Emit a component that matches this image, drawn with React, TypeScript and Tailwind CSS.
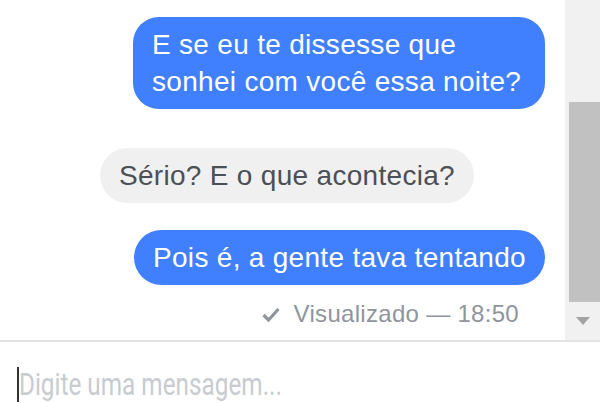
const font = { fontFamily: '"Liberation Sans", Arial, sans-serif' };

function Scrollbar() {
  return (
    <div className="flex w-[35px] flex-col bg-[#f1f1f1] pl-[4px]">
      <div className="h-[102px]" />
      <div className="h-[200px] bg-[#c1c1c1]" />
      <div className="flex flex-1 items-center justify-center pr-[4px]">
        <svg width="14" height="8" viewBox="0 0 14 8">
          <path d="M0 0 L14 0 L7 8 Z" fill="#a3a3a3" />
        </svg>
      </div>
    </div>
  );
}

function CheckMark() {
  return (
    <svg width="18" height="15" viewBox="0 0 18 15">
      <path d="M1.5 8 L6.5 13 L16.5 2" fill="none" stroke="#90949c" strokeWidth="3.2" strokeLinejoin="miter" />
    </svg>
  );
}

export default function App() {
  return (
    <div className="flex h-[403px] w-[600px] flex-col overflow-hidden bg-white" style={font}>
      <div className="flex h-[340px]">
        <div className="flex flex-1 flex-col pr-[20px]">
          <div className="mt-[17px] flex justify-end">
            <div className="w-[412px] whitespace-nowrap rounded-[26px] bg-[#4080ff] py-[9px] pl-[19px] pr-[16px] text-[28px] leading-[37px] tracking-[0.3px] text-white">
              E se eu te dissesse que
              <br />
              sonhei com você essa noite?
            </div>
          </div>
          <div className="mt-[39px] flex pl-[100px]">
            <div className="rounded-[28px] bg-[#f1f0f0] px-[19px] py-[9px] text-[28px] leading-[37px] tracking-[0.3px] text-[#4b4f56]">
              Sério? E o que acontecia?
            </div>
          </div>
          <div className="mt-[27px] flex justify-end">
            <div className="rounded-[28px] bg-[#4080ff] px-[19px] py-[9px] text-[28px] leading-[37px] tracking-[0.3px] text-white">
              Pois é, a gente tava tentando
            </div>
          </div>
          <div className="mt-[11px] flex items-center justify-end gap-[14px] pr-[26px] text-[24px] tracking-[0.3px] text-[#90949c]">
            <CheckMark />
            <span>Visualizado — 18:50</span>
          </div>
        </div>
        <Scrollbar />
      </div>
      <div className="h-[2px] bg-[#e4e4e4]" />
      <div className="flex flex-1 items-start pl-[17px] pt-[25px]">
        <div className="h-[35px] w-[2px] bg-[#333]" />
        <span
          className="origin-left scale-x-[0.76] text-[32px] leading-[35px] text-[#c8ccd1]"
          style={{ fontFamily: 'Roboto, sans-serif' }}
        >
          Digite uma mensagem...
        </span>
      </div>
    </div>
  );
}
